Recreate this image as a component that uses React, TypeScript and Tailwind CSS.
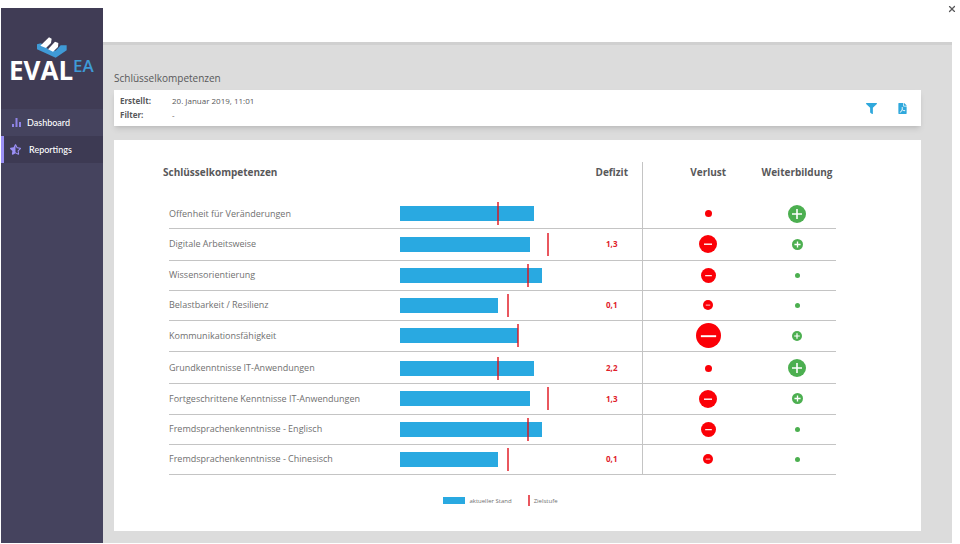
import React from 'react';
import { FaFilePdf, FaFilter, FaStarHalfAlt } from 'react-icons/fa';
import { FaXmark } from 'react-icons/fa6';

interface Competence {
  name: string;
  current: number;
  target: number;
  deficit?: string;
  loss: number;
  training: number;
  rowClass?: string;
}

const MAX_LEVEL = 8;

const competences: Competence[] = [
  { name: 'Offenheit für Veränderungen', current: 6.7, target: 4.85, loss: 1, training: 4, rowClass: 'h-[30px] *:pt-0.5' },
  { name: 'Digitale Arbeitsweise', current: 6.5, target: 7.35, deficit: '1,3', loss: 4, training: 3, rowClass: 'h-8' },
  { name: 'Wissensorientierung', current: 7.1, target: 6.35, loss: 3, training: 1 },
  { name: 'Belastbarkeit / Resilienz', current: 4.9, target: 5.35, deficit: '0,1', loss: 2, training: 1 },
  { name: 'Kommunikationsfähigkeit', current: 5.9, target: 5.85, loss: 5, training: 2, rowClass: 'h-[31px]' },
  { name: 'Grundkenntnisse IT-Anwendungen', current: 6.7, target: 4.85, deficit: '2,2', loss: 1, training: 4, rowClass: 'h-8 *:pt-0.5' },
  { name: 'Fortgeschrittene Kenntnisse IT-Anwendungen', current: 6.5, target: 7.35, deficit: '1,3', loss: 4, training: 3, rowClass: 'h-[31px]' },
  { name: 'Fremdsprachenkenntnisse - Englisch', current: 7.1, target: 6.35, loss: 3, training: 1 },
  { name: 'Fremdsprachenkenntnisse - Chinesisch', current: 4.9, target: 5.35, deficit: '0,1', loss: 2, training: 1 },
];

const lossSizes = ['', 'size-[7px]', 'size-[10px]', 'size-[15px]', 'size-[18px]', 'size-[25px]'];
const trainingSizes = ['', 'size-[5px]', 'size-[10px]', 'size-[11px]', 'size-[18px]'];

function Logo() {
  return (
    <div className="h-[101px] pt-[29px] pl-2 bg-[#403c55]">
      <svg viewBox="110 112 90 63" className="w-[30px] h-[21px] ml-7" aria-hidden="true">
        <path d="M110 134 L122 131 L146 150 L166 153 L181 137 H199 V152 L166 174 L110 149 Z" fill="#3f9ad6" />
        <path d="M120 138 L146 113 L154 117 L152 130 L137 145 Z" fill="#fff" />
        <path d="M143 149 L164 126 L174 130 L173 142 L158 156 Z" fill="#fff" />
      </svg>
      <div className="flex items-start">
        <span className="text-[26px] leading-6 font-bold text-white">EVAL</span>
        <span className="text-[17px] leading-4 font-semibold text-[#3f9ad6]">EA</span>
      </div>
    </div>
  );
}

function Sidebar() {
  return (
    <aside className="w-[102px] shrink-0 bg-[#45435e]">
      <Logo />
      <nav className="font-['Lato','Open_Sans',sans-serif] text-[9px] font-medium text-white">
        <a href="#dashboard" className="flex items-center gap-1.5 h-[27px] pl-[11px]">
          <svg viewBox="0 0 9 9" className="size-[9px]" fill="#8f84e6" aria-hidden="true">
            <path d="M0 6h2v3H0zM3.5 0h2v9h-2zM7 4h2v5H7z" />
          </svg>
          Dashboard
        </a>
        <a href="#reportings" className="flex items-center gap-2 h-[27px] pl-1.5 border-l-3 border-[#9a8ff5] bg-[#3d3a53]">
          <FaStarHalfAlt className="size-[11px] text-[#9a8ff5]" />
          Reportings
        </a>
      </nav>
    </aside>
  );
}

function ReportInfo() {
  return (
    <section className="flex items-center justify-between h-9 pl-1.5 pr-[13px] bg-white shadow-md">
      <dl className="grid grid-cols-[52px_auto] text-[8px] leading-[14px]">
        <dt className="font-bold">Erstellt:</dt>
        <dd>20. Januar 2019, 11:01</dd>
        <dt className="font-bold">Filter:</dt>
        <dd>-</dd>
      </dl>
      <div className="flex gap-5 text-[#2fa8dc]">
        <button aria-label="Filter"><FaFilter className="size-[11px]" /></button>
        <button aria-label="Als PDF exportieren"><FaFilePdf className="size-[11px]" /></button>
      </div>
    </section>
  );
}

function LevelBar({ current, target }: { current: number; target: number }) {
  return (
    <div className="relative w-40 h-[23px] flex items-center">
      <div className="h-[15px] bg-[#29a9e1]" style={{ width: `${(current / MAX_LEVEL) * 100}%` }} />
      <div className="absolute top-0 h-full w-0.5 bg-[#e0101a]/70" style={{ left: `${(target / MAX_LEVEL) * 100}%` }} />
    </div>
  );
}

function LossDot({ level }: { level: number }) {
  return (
    <svg viewBox="0 0 18 18" className={`mx-auto ${lossSizes[level]}`} aria-hidden="true">
      <circle cx="9" cy="9" r="9" fill="#fb0007" />
      {level > 1 && <path d={level === 5 ? 'M3.5 9.5h11' : 'M5 9.2h8'} stroke="#fff" strokeWidth="1.4" />}
    </svg>
  );
}

function TrainingDot({ level }: { level: number }) {
  return (
    <svg viewBox="0 0 18 18" className={`mx-auto ${trainingSizes[level]}`} aria-hidden="true">
      <circle cx="9" cy="9" r="9" fill="#4caf50" />
      {level > 1 && <path d="M4 9h10M9 4v10" stroke="#fff" strokeWidth={level === 4 ? 1.6 : 2.2} />}
    </svg>
  );
}

function CompetenceTable() {
  return (
    <table className="w-full table-fixed text-left">
      <colgroup>
        <col className="w-[231px]" />
        <col className="w-[182px]" />
        <col className="w-[60px]" />
        <col />
        <col className="w-[78px]" />
      </colgroup>
      <thead>
        <tr className="h-9 align-top text-[10px] leading-5">
          <th colSpan={2}><span className="-ml-1.5">Schlüsselkompetenzen</span></th>
          <th className="text-center border-r border-[#c4c4c4]">Defizit</th>
          <th className="text-center pl-4">Verlust</th>
          <th className="text-center">Weiterbildung</th>
        </tr>
      </thead>
      <tbody>
        {competences.map(c => (
          <tr key={c.name} className={`border-b border-[#c4c4c4] text-[9px] leading-[14px] ${c.rowClass ?? 'h-[30px]'}`}>
            <th scope="row" className="font-normal whitespace-nowrap text-[#707070]">{c.name}</th>
            <td>
              <LevelBar current={c.current} target={c.target} />
            </td>
            <td className="text-center text-[8px] font-bold text-[#e0202a] border-r border-[#c4c4c4]">{c.deficit}</td>
            <td className="pl-4"><LossDot level={c.loss} /></td>
            <td><TrainingDot level={c.training} /></td>
          </tr>
        ))}
      </tbody>
    </table>
  );
}

function Legend() {
  return (
    <div className="flex items-center justify-center gap-4 mt-5 pr-1 text-[6px] leading-3 text-[#707070]">
      <div className="flex items-center gap-1">
        <span className="w-[22px] h-[7px] bg-[#29a9e1]" />
        aktueller Stand
      </div>
      <div className="flex items-center gap-1">
        <span className="w-0.5 h-[11px] bg-[#e0101a]/70" />
        Zielstufe
      </div>
    </div>
  );
}

export default function App() {
  return (
    <div className="relative min-h-screen flex pt-2 pl-px pr-2 pb-px bg-white font-['Open_Sans',sans-serif] text-[#58585a]">
      <button aria-label="Schließen" className="absolute top-1 right-[3px] size-2.5">
        <FaXmark className="size-2.5" />
      </button>
      <Sidebar />
      <div className="flex-1 flex flex-col">
        <header className="h-[34px] bg-white" />
        <main className="flex-1 flex flex-col pl-[11px] pr-[31px] pt-[25px] pb-3 border-t-3 border-[#d0d0d0] bg-[#dcdcdc]">
          <h1 className="mb-1 text-[10px] leading-4 font-medium">Schlüsselkompetenzen</h1>
          <ReportInfo />
          <section className="flex-1 mt-3.5 pt-[22px] pl-[55px] pr-[85px] pb-4 bg-white">
            <CompetenceTable />
            <Legend />
          </section>
        </main>
      </div>
    </div>
  );
}
